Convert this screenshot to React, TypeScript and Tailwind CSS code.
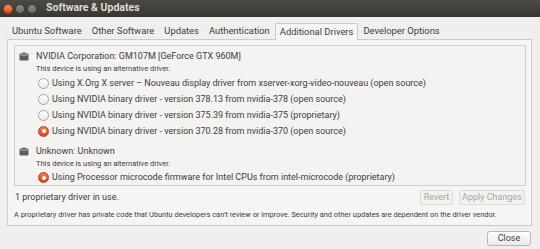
import React from "react";

const ChipIcon = () => (
  <svg width="10" height="9" viewBox="0 0 10 9" className="shrink-0">
    <rect x="0.5" y="1.5" width="9" height="7" rx="1" fill="#5d5c58" />
    <rect x="1" y="2" width="8" height="2" fill="#8a8984" />
    <rect x="3" y="0.5" width="4" height="1.5" rx="0.5" fill="#6b6a66" />
  </svg>
);

const Radio = ({ checked }: { checked?: boolean }) =>
  checked ? (
    <span className="w-[11px] h-[11px] rounded-full bg-gradient-to-b from-[#f07a50] to-[#d6451c] border border-[#c1401a] flex items-center justify-center shrink-0">
      <span className="w-[4px] h-[4px] rounded-full bg-white" />
    </span>
  ) : (
    <span className="w-[11px] h-[11px] rounded-full bg-gradient-to-b from-white to-[#ecebe9] border border-[#a8a6a2] shrink-0" />
  );

const Option = ({ label, checked }: { label: string; checked?: boolean }) => (
  <div className="h-[16px] flex items-center gap-[3px] pl-[23px]">
    <Radio checked={checked} />
    <span className="text-[9px] leading-none whitespace-nowrap">{label}</span>
  </div>
);

export default function App() {
  const tabs = ["Ubuntu Software", "Other Software", "Updates", "Authentication", "Additional Drivers", "Developer Options"];

  return (
    <div className="w-[540px] h-[249px] bg-[#f0efed] flex flex-col overflow-hidden text-[#3c3c3c] font-['Roboto',sans-serif]">
      {/* title bar */}
      <div className="h-[17px] bg-gradient-to-b from-[#4b4a46] to-[#38372f] flex items-center pl-[3px] shrink-0">
        <span className="w-[10px] h-[10px] rounded-full bg-gradient-to-b from-[#f48a62] to-[#df4c1e] border border-[#a83a17]" />
        <span className="w-[10px] h-[10px] rounded-full bg-gradient-to-b from-[#8d8c86] to-[#6a6964] border border-[#3a3935] ml-[2px]" />
        <span className="w-[10px] h-[10px] rounded-full bg-gradient-to-b from-[#8d8c86] to-[#6a6964] border border-[#3a3935] ml-[2px]" />
        <span className="ml-[9px] text-[10.5px] font-bold text-[#dfdbd2] leading-none">Software &amp; Updates</span>
      </div>

      <div className="flex-1 flex flex-col pl-[7px] pr-[8px] pt-[6px]">
        {/* tabs */}
        <div className="flex h-[16px]">
          {tabs.map((t) =>
            t === "Additional Drivers" ? (
              <div
                key={t}
                className="relative z-10 -mb-px h-[17px] px-[4px] flex items-center bg-[#f6f5f4] border border-b-0 border-[#cdcbc7] rounded-t-[2px] text-[9.4px] whitespace-nowrap"
              >
                {t}
              </div>
            ) : (
              <div key={t} className="h-[16px] px-[5px] flex items-center text-[9.4px] whitespace-nowrap">
                {t}
              </div>
            )
          )}
        </div>

        {/* notebook page */}
        <div className="h-[187px] border border-[#cdcbc7] bg-[#f6f5f4] flex flex-col pl-[6px] pr-[5px] pt-[5px]">
          <div className="h-[141px] border border-[#d2d0cc] bg-[#f4f3f1] flex flex-col pt-[3px] overflow-hidden">
            <div className="h-[14px] flex items-center gap-[7px] pl-[4px]">
              <ChipIcon />
              <span className="text-[9px] leading-none">NVIDIA Corporation: GM107M [GeForce GTX 960M]</span>
            </div>
            <div className="h-[12px] flex items-center pl-[21px] text-[7.5px] leading-none">
              This device is using an alternative driver.
            </div>
            <Option label="Using X.Org X server – Nouveau display driver from xserver-xorg-video-nouveau (open source)" />
            <Option label="Using NVIDIA binary driver - version 378.13 from nvidia-378 (open source)" />
            <Option label="Using NVIDIA binary driver - version 375.39 from nvidia-375 (proprietary)" />
            <Option label="Using NVIDIA binary driver - version 370.28 from nvidia-370 (open source)" checked />

            <div className="h-[13px] mt-[6px] flex items-center gap-[7px] pl-[4px]">
              <ChipIcon />
              <span className="text-[9px] leading-none">Unknown: Unknown</span>
            </div>
            <div className="h-[12px] flex items-center pl-[21px] text-[7.5px] leading-none">
              This device is using an alternative driver.
            </div>
            <div className="h-[15px] flex items-center gap-[3px] pl-[23px]">
              <Radio checked />
              <span className="text-[9px] leading-none whitespace-nowrap">
                Using Processor microcode firmware for Intel CPUs from intel-microcode (proprietary)
              </span>
            </div>
          </div>

          <div className="mt-[4px] h-[15px] flex items-center">
            <span className="text-[9px] leading-none pl-[1px]">1 proprietary driver in use.</span>
            <div className="ml-auto flex gap-[6px] pr-[1px]">
              <button className="h-[15px] w-[33px] border border-[#dcdad6] rounded-[2px] bg-[#f3f2f0] text-[9px] text-[#a9a7a3] leading-none">
                Revert
              </button>
              <button className="h-[15px] w-[66px] border border-[#dcdad6] rounded-[2px] bg-[#f3f2f0] text-[9px] text-[#a9a7a3] leading-none">
                Apply Changes
              </button>
            </div>
          </div>

          <div className="mt-[4px] h-[12px] flex items-center text-[7.4px] leading-none whitespace-nowrap">
            A proprietary driver has private code that Ubuntu developers can’t review or improve. Security and other updates are dependent on the driver vendor.
          </div>
        </div>

        {/* bottom */}
        <div className="flex justify-end mt-[5px] pr-[1px]">
          <button className="h-[15px] w-[44px] border border-[#b9b7b3] rounded-[3px] bg-gradient-to-b from-white to-[#ebeae8] text-[9px] text-[#3c3c3c] leading-none">
            Close
          </button>
        </div>
      </div>
    </div>
  );
}
